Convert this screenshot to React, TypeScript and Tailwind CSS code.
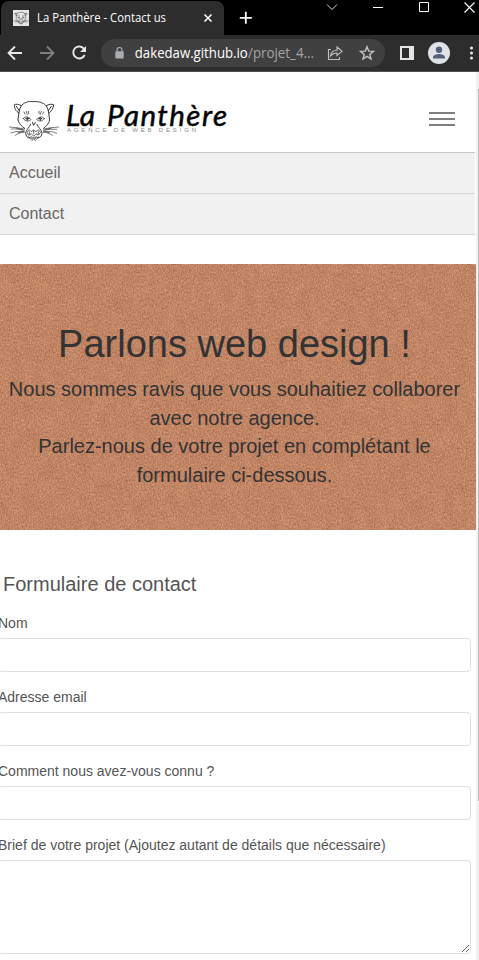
import React from "react";

function Panther({ className, stroke = 2.6 }: { className?: string; stroke?: number }) {
  return (
    <svg viewBox="24 24 156 132" className={className} fill="none" stroke="#1c1c1c" strokeWidth={stroke} strokeLinecap="round" strokeLinejoin="round">
      <path d="M66 45C76 34 90 34 100 35C114 34 128 36 137 46M64 47C55 42 48 42 43 44C43 54 47 64 57 69M139 47C147 42 155 42 161 44C160 54 156 64 146 69M49 49L58 62M154 49L145 62" />
      <path d="M64 47C56 60 56 74 54 90C58 102 64 108 74 115M139 47C147 60 146 74 149 90C146 101 140 108 131 115" />
      <path d="M70 86C75 78 86 79 93 89C87 95 76 95 70 86ZM133 86C128 78 117 79 110 89C116 95 127 95 133 86Z" strokeWidth="2" />
      <path d="M78 86H87M82 83V91M125 86H116M121 83V91" strokeWidth="4" stroke="#444" />
      <path d="M97 97L101 106L106 97M92 103C87 113 80 118 77 128C77 138 83 146 91 143M111 103C115 113 123 118 126 128C126 138 119 146 111 143" />
      <path d="M82 126L88 119L94 125L101 120L108 125L115 119L122 127L115 135L108 131L101 139L94 131L87 135ZM86 140L92 148L101 142L110 148L116 140M96 152L101 146L106 152M88 125V132M101 122V130M115 125V132M92 138L97 144M110 138L105 144" strokeWidth="2" />
      <path d="M79 64L82 73M86 64V71M72 66L75 72M124 64L121 73M117 64V71M131 66L128 72" strokeWidth="2" />
      <path d="M74 117C58 114 43 112 28 111M73 121C60 118 48 116 35 117M73 124C58 124 46 123 33 129M73 127C62 127 53 130 46 136M130 117C146 114 160 112 176 111M130 121C143 118 157 117 170 118M130 124C146 124 158 123 170 130M130 127C142 127 150 131 157 136" strokeWidth="1.7" />
      <path d="M49 114L69 119M55 128L70 124M154 114L135 119M148 128L134 124" strokeWidth="3" stroke="#555" />
    </svg>
  );
}

function TitleBar() {
  return (
    <div className="flex h-[35px] bg-black text-white">
      <div className="ml-px mt-px flex h-[34px] w-[223px] items-center rounded-t-lg bg-[#2d2d2d] pl-3">
        <span className="flex h-4 w-4 shrink-0 items-center justify-center bg-[#e6e6e6]">
          <Panther className="h-4 w-4" stroke={4} />
        </span>
        <svg className="ml-2 h-[18px] w-[134px]" viewBox="0 0 134 18">
          <text x="0" y="13" fontSize="12" fill="#fff" textLength="129" lengthAdjust="spacingAndGlyphs" className="font-['Open_Sans',sans-serif]">La Panthère - Contact us</text>
        </svg>
        <svg className="ml-[32px] h-[10px] w-[10px]" viewBox="0 0 10 10" stroke="#fff" strokeWidth="1.6"><path d="M1.5 1.5l7 7M8.500 1.500l-7 7" /></svg>
      </div>
      <svg className="ml-[15px] mt-[11px] h-[13px] w-[13px]" viewBox="0 0 13 13" stroke="#fff" strokeWidth="1.800"><path d="M6.800 .8v12M.8 6.800h12" /></svg>
      <svg className="ml-[74px] mt-[2px] h-[11px] w-[12px]" viewBox="0 0 12 11" fill="none" stroke="#ddd" strokeWidth="1"><path d="M1 2.500L6 7.500L11 2.500" /></svg>
      <svg className="ml-[34px] mt-[2px] h-[11px] w-[12px]" viewBox="0 0 12 11" stroke="#fff" strokeWidth="1"><path d="M1 5.500h10" /></svg>
      <svg className="ml-[34px] mt-[2px] h-[11px] w-[11px]" viewBox="0 0 11 11" fill="none" stroke="#fff" strokeWidth="1"><path d="M1.500 .5h9v9h-9z" /></svg>
      <svg className="ml-[35px] mt-[2px] h-[11px] w-[11px]" viewBox="0 0 11 11" stroke="#fff" strokeWidth="1.1"><path d="M.5 .5l10 10M10.500 .5l-10 10" /></svg>
    </div>
  );
}

function Toolbar() {
  return (
    <div className="flex h-[37px] items-center border-b border-[#554f53] bg-[#2d2d2d]">
      <svg className="ml-[7px] h-4 w-4" viewBox="0 0 16 16" fill="none" stroke="#e8e8e8" strokeWidth="1.800"><path d="M15 8H2M8 1.500L1.500 8L8 14.500" /></svg>
      <svg className="ml-4 h-4 w-4" viewBox="0 0 16 16" fill="none" stroke="#7f7f7f" strokeWidth="1.800"><path d="M1 8H14M8 1.500L14.500 8L8 14.500" /></svg>
      <svg className="ml-4 h-4 w-4" viewBox="0 0 16 16" fill="none" stroke="#e8e8e8" strokeWidth="1.900"><path d="M13.200 4A6 6 0 1 0 13.700 10" /><path d="M15 1v6H9z" fill="#e8e8e8" stroke="none" /></svg>
      <div className="ml-[14px] flex h-7 w-[284px] items-center rounded-full bg-[#404040]">
        <svg className="ml-[14px] h-3 w-[9px]" viewBox="0 0 9 12"><path d="M2 5V3a2.500 2.500 0 0 1 5 0v2" fill="none" stroke="#a9adb2" strokeWidth="1.200" /><rect x=".3" y="4.300" width="8.400" height="7.200" rx=".8" fill="#a9adb2" /></svg>
        <svg className="ml-[10px] h-5 w-[182px]" viewBox="0 0 182 20">
          <text x=".8" y="15" fontSize="14" fill="#fff" textLength="113" lengthAdjust="spacingAndGlyphs" className="font-['Open_Sans',sans-serif]">dakedaw.github.io</text>
          <text x="114" y="15" fontSize="14" fill="#a5a5a5" textLength="66" lengthAdjust="spacingAndGlyphs" className="font-['Open_Sans',sans-serif]">/projet_4...</text>
        </svg>
        <svg className="ml-[11px] h-4 w-4" viewBox="0 0 16 16" fill="none" stroke="#c0c0c0" strokeWidth="1.100"><path d="M4 4.500H1.500V14.500H12.500V12M3.500 11C4 7 6.500 5.200 10 5.200V2L15 6.300L10 10.500V8C7 8 5 9 3.500 11Z" /></svg>
        <svg className="ml-4 h-4 w-4" viewBox="0 0 16 16" fill="none" stroke="#c5c5c5" strokeWidth="1.400"><path d="M8 1.800L9.700 6.100L14.400 6.400L10.800 9.400L12 14L8 11.400L4 14L5.200 9.400L1.600 6.400L6.300 6.100Z" /></svg>
      </div>
      <svg className="ml-[15px] h-[14px] w-[14px]" viewBox="0 0 14 14"><path d="M0 0H14V14H0ZM2 2V12H9V2Z" fill="#e4e4e4" fillRule="evenodd" /></svg>
      <svg className="ml-[14px] h-[22px] w-[22px]" viewBox="0 0 22 22"><circle cx="11" cy="11" r="11" fill="#dfe2e7" /><circle cx="11" cy="7.700" r="3.200" fill="#57617a" /><path d="M5 16.500v-1.200c0-2.200 3.800-3.300 6-3.300s6 1.100 6 3.300v1.200z" fill="#57617a" /></svg>
      <svg className="ml-[19px] h-[14px] w-[4px]" viewBox="0 0 4 14" fill="#e8e8e8"><circle cx="2.500" cy="2" r="1.500" /><circle cx="2.500" cy="7" r="1.500" /><circle cx="2.500" cy="12" r="1.500" /></svg>
    </div>
  );
}

function SiteHeader() {
  return (
    <header className="flex h-[81px] w-[475px] border-b border-[#c8c8c8]">
      <Panther className="ml-2 mt-[26px] h-[44px] w-[52px]" />
      <svg className="ml-[6px] mt-[24px] h-[44px] w-[164px]" viewBox="0 0 164 44">
        <g fontSize="29.500" fill="#050505" stroke="#050505" strokeWidth=".5" fontStyle="italic" className="font-['Lato',sans-serif]">
          <text x="0" y="29.700" textLength="29" lengthAdjust="spacingAndGlyphs">La</text>
          <text x="41" y="29.700" textLength="120" lengthAdjust="spacing">Panthère</text>
        </g>
        <text x="1" y="35.800" fontSize="6" fill="#8a8a8a" textLength="129" className="font-['Liberation_Sans',sans-serif]">AGENCE DE WEB DESIGN</text>
      </svg>
      <button className="ml-[199px] mt-[40px] flex h-[14px] w-[26px] flex-col gap-1" aria-label="Menu">
        <span className="h-[2px] w-full shrink-0 bg-[#808080]" />
        <span className="h-[2px] w-full shrink-0 bg-[#808080]" />
        <span className="h-[2px] w-full shrink-0 bg-[#808080]" />
      </button>
    </header>
  );
}

function Hero() {
  return (
    <section className="relative mt-[29px] h-[266px] bg-[#c48763] text-center text-[#333]">
      <svg className="absolute inset-0 h-full w-full" aria-hidden="true">
        <filter id="kraft" x="0" y="0" width="100%" height="100%" colorInterpolationFilters="sRGB">
          <feTurbulence type="fractalNoise" baseFrequency=".75 .5" numOctaves="2" seed="8" result="grain" />
          <feTurbulence type="fractalNoise" baseFrequency=".09 .06" numOctaves="2" seed="3" result="mottle" />
          <feComposite in="grain" in2="mottle" operator="arithmetic" k2=".85" k3=".15" />
          <feColorMatrix values=".36 0 0 0 .575  .34 0 0 0 .35  .31 0 0 0 .24  0 0 0 0 1" />
        </filter>
        <rect width="100%" height="100%" filter="url(#kraft)" />
      </svg>
      <div className="relative w-[469px] pt-[58px]">
        <h1 className="text-[38px] leading-[44px]">Parlons web design !</h1>
        <p className="mt-[9px] text-[20px] leading-[28.57px]">
          Nous sommes ravis que vous souhaitiez collaborer<br />avec notre agence.<br />Parlez-nous de votre projet en complétant le<br />formulaire ci-dessous.
        </p>
      </div>
    </section>
  );
}

function Field({ label }: { label: string }) {
  return (
    <label className="mb-[15px] block h-[59px]">
      <span className="block h-[25px] text-[14px] leading-5">{label}</span>
      <input className="block h-[34px] w-full rounded border border-[#e0e0e0] bg-white px-3" />
    </label>
  );
}

export default function App() {
  return (
    <div className="h-[960px] w-[479px] overflow-hidden bg-white font-['Liberation_Sans',Arial,sans-serif]">
      <TitleBar />
      <Toolbar />
      <div className="flex h-[888px]">
        <main className="w-[476px] shrink-0 overflow-hidden">
          <SiteHeader />
          <nav className="w-[475px] text-[16px] leading-[40px] text-[#666]">
            <a className="block h-[41px] border-b border-[#d6d6d6] bg-[#f1f1f1] pl-[9px]">Accueil</a>
            <a className="block h-[41px] border-b border-[#d6d6d6] bg-[#f1f1f1] pl-[9px]">Contact</a>
          </nav>
          <Hero />
          <form className="-ml-[2px] w-[473px] pt-[42px] text-[#555]">
            <h2 className="mb-[17px] ml-[5px] text-[20px] leading-6">Formulaire de contact</h2>
            <Field label="Nom" />
            <Field label="Adresse email" />
            <Field label="Comment nous avez-vous connu ?" />
            <label className="block">
              <span className="block h-[25px] text-[14px] leading-5">Brief de votre projet (Ajoutez autant de détails que nécessaire)</span>
              <textarea className="block h-[94px] w-full resize-y rounded border border-[#e0e0e0] bg-white" />
            </label>
          </form>
        </main>
        <div className="flex w-[3px] justify-end bg-[#f1f1f1]">
          <div className="mt-[17px] h-[712px] w-px bg-[#bdbdbd]" />
        </div>
      </div>
    </div>
  );
}
